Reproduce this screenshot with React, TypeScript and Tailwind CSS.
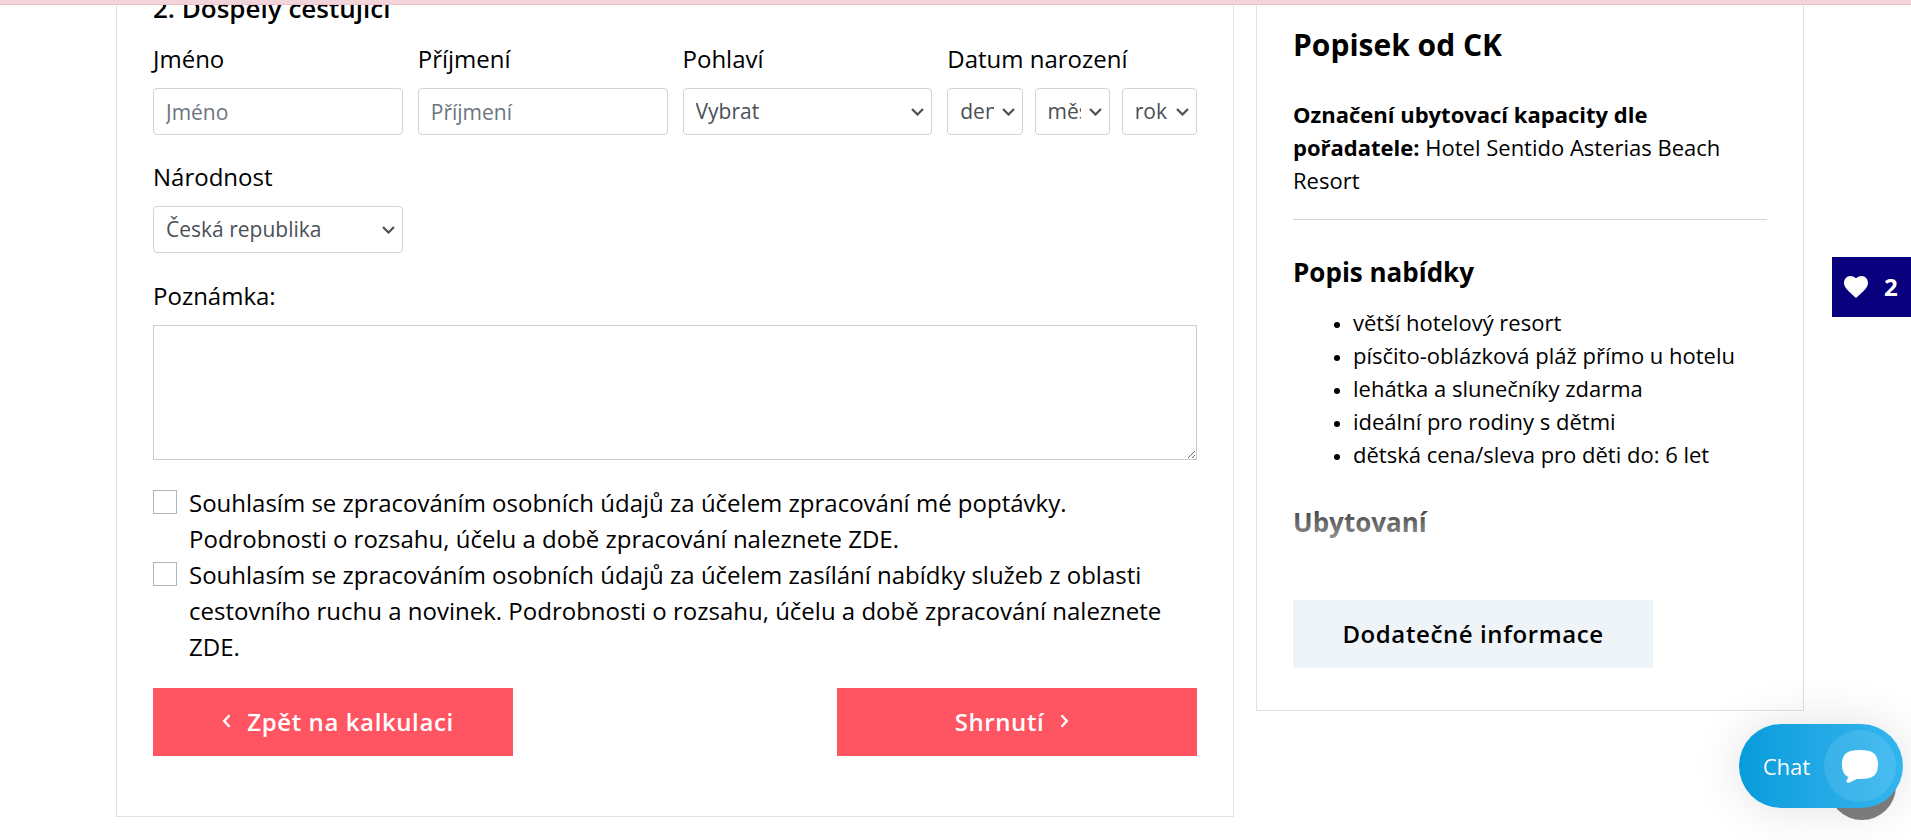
import { FC, ReactNode, SelectHTMLAttributes } from "react"

const labelClass = "mb-[11px] block text-2xl leading-9"
const fieldClass = "block h-[47px] w-full rounded border border-[#ced4da] bg-white px-3 text-[21px] text-[#495057] placeholder:text-[#6c757d]"

const offerPoints = [
    "větší hotelový resort",
    "písčito-oblázková pláž přímo u hotelu",
    "lehátka a slunečníky zdarma",
    "ideální pro rodiny s dětmi",
    "dětská cena/sleva pro děti do: 6 let",
]

const Chevron: FC<{ left?: boolean }> = ({ left }) => (
    <svg viewBox="0 0 9 14" className="mb-0.5 h-3.5 w-[9px]" fill="none" stroke="currentColor" strokeWidth="2.400">
        <path d={left ? "M7.500 1.200 2.200 7l5.300 5.800" : "M1.500 1.200 6.800 7l-5.300 5.800"} />
    </svg>
)

const Select: FC<SelectHTMLAttributes<HTMLSelectElement>> = ({ children, ...props }) => (
    <div className="relative min-w-0">
        <select {...props} className="block h-[47px] w-full appearance-none rounded border border-[#ced4da] bg-white pr-7 pl-3 text-[21px] text-[#495057]">
            {children}
        </select>
        <svg viewBox="0 0 13 8" className="pointer-events-none absolute top-5 right-2 h-2 w-[13px]" fill="none" stroke="#495057" strokeWidth="2.200">
            <path d="M1 1l5.500 5.500L12 1" />
        </svg>
    </div>
)

const Consent: FC<{ id: string, children: ReactNode }> = ({ id, children }) => (
    <div className="flex items-start gap-3">
        <input type="checkbox" id={id} className="mt-[5px] size-6 shrink-0 appearance-none border border-[#adb5bd] bg-white checked:bg-[#ff5562]" />
        <label htmlFor={id} className="text-2xl leading-9">{children}</label>
    </div>
)

const TravellerForm: FC = () => (
    <form className="border border-[#dee2e6] px-9 pb-[60px]" onSubmit={(e) => e.preventDefault()}>
        <h2 className="text-[26px] leading-9 font-semibold">2. Dospělý cestující</h2>

        <div className="mt-[15px] grid grid-cols-4 gap-x-[15px] gap-y-6">
            <div>
                <label htmlFor="firstName" className={labelClass}>Jméno</label>
                <input id="firstName" type="text" placeholder="Jméno" className={fieldClass} />
            </div>
            <div>
                <label htmlFor="lastName" className={labelClass}>Příjmení</label>
                <input id="lastName" type="text" placeholder="Příjmení" className={fieldClass} />
            </div>
            <div>
                <label htmlFor="gender" className={labelClass}>Pohlaví</label>
                <Select id="gender">
                    <option>Vybrat</option>
                    <option>Muž</option>
                    <option>Žena</option>
                </Select>
            </div>
            <div>
                <label htmlFor="birthDay" className={labelClass}>Datum narození</label>
                <div className="grid grid-cols-3 gap-3">
                    <Select id="birthDay">
                        <option>den</option>
                    </Select>
                    <Select aria-label="Měsíc narození">
                        <option>měsíc</option>
                    </Select>
                    <Select aria-label="Rok narození">
                        <option>rok</option>
                    </Select>
                </div>
            </div>
            <div>
                <label htmlFor="nationality" className={labelClass}>Národnost</label>
                <Select id="nationality">
                    <option>Česká republika</option>
                    <option>Slovensko</option>
                </Select>
            </div>
        </div>

        <label htmlFor="note" className={`${labelClass} mt-[25px]`}>Poznámka:</label>
        <textarea id="note" className="block h-[135px] w-full resize border border-[#cccccc] bg-white p-2 text-[21px]"></textarea>

        <div className="mt-[25px]">
            <Consent id="consentInquiry">
                Souhlasím se zpracováním osobních údajů za účelem zpracování mé poptávky. Podrobnosti o rozsahu, účelu a době zpracování naleznete <a href="#zasady">ZDE.</a>
            </Consent>
            <Consent id="consentOffers">
                Souhlasím se zpracováním osobních údajů za účelem zasílání nabídky služeb z oblasti cestovního ruchu a novinek. Podrobnosti o rozsahu, účelu a době zpracování naleznete <a href="#zasady">ZDE.</a>
            </Consent>
        </div>

        <div className="mt-[23px] flex justify-between">
            <button type="button" className="flex h-17 w-[360px] items-center justify-center gap-4 bg-[#ff5562] pl-2.5 text-2xl font-semibold tracking-wide text-white">
                <Chevron left />
                Zpět na kalkulaci
            </button>
            <button type="submit" className="flex h-17 w-[360px] items-center justify-center gap-4 bg-[#ff5562] pr-2.5 text-2xl font-semibold tracking-wide text-white">
                Shrnutí
                <Chevron />
            </button>
        </div>
    </form>
)

const OfferPanel: FC = () => (
    <aside className="border border-[#dee2e6] px-9 pt-[30px] pb-[42px]">
        <div className="relative">
            <h2 className="text-[30px] leading-[50px] font-bold">Popisek od CK</h2>
            <p className="mt-7 text-[22px] leading-[33px]">
                <strong>Označení ubytovací kapacity dle pořadatele:</strong> Hotel Sentido Asterias Beach Resort
            </p>
            <hr className="mt-[22px] border-[#ced4da]" />
            <h3 className="mt-[34px] text-[26px] leading-9 font-bold">Popis nabídky</h3>
            <ul className="mt-4 list-disc pl-15 text-[22px] leading-[33px] marker:text-lg">
                {offerPoints.map((point) => <li key={point}>{point}</li>)}
            </ul>
            <h3 className="mt-[33px] text-[26px] leading-9 font-bold">Ubytovaní</h3>
            {/* fade over the collapsed description */}
            <div className="absolute inset-x-0 -bottom-10 h-24 bg-gradient-to-b from-white/0 to-white"></div>
        </div>
        <button type="button" className="mt-[60px] h-17 w-[360px] bg-[#eff4f9] text-2xl font-semibold tracking-wide">
            Dodatečné informace
        </button>
    </aside>
)

const App: FC = () => {
    return (
        <div className="overflow-hidden bg-white font-['Open_Sans','Noto_Sans',sans-serif] text-black">
            <div className="fixed inset-x-0 top-0 z-10 h-[5px] border-b border-[#f1bfc6] bg-[#f1d5da]"></div>

            <main className="-mt-[11px] grid grid-cols-[minmax(0,1118fr)_minmax(0,548fr)] items-start gap-[22px] pr-[107px] pb-6 pl-29">
                <TravellerForm />
                <OfferPanel />
            </main>

            <a href="#oblibene" aria-label="Oblíbené" className="fixed top-[257px] right-0 flex h-15 w-[79px] items-center gap-4 bg-[#08007d] pl-3 text-2xl font-bold text-white">
                <svg viewBox="0 0 24 22" className="h-[22px] w-6" fill="currentColor">
                    <path d="M12 22C10 20 5 16 2.200 12.500C.6 10.500 0 8.800 0 6.800C0 3 2.800 0 6.400 0C8.800 0 10.800 1.100 12 2.300C13.200 1.100 15.200 0 17.600 0C21.200 0 24 3 24 6.800C24 8.800 23.400 10.500 21.800 12.500C19 16 14 20 12 22Z" />
                </svg>
                2
            </a>

            <button type="button" aria-label="Nahoru" className="fixed right-[15px] bottom-5 size-17 rounded-full bg-[#808080]"></button>
            <button type="button" className="fixed right-2 bottom-8 flex h-21 w-[164px] items-center justify-between rounded-full bg-gradient-to-r from-[#049cdb] to-[#33b5ef] pr-[7px] pl-6 text-[22px] text-white shadow-[0_0_50px_rgba(0,0,0,0.12)]">
                Chat
                <span className="flex size-18 items-center justify-center rounded-full bg-white/10">
                    <svg viewBox="0 0 36 33" className="h-[33px] w-9" fill="currentColor">
                        <path d="M18 0C31 0 36 4 36 14.500C36 25 31 29 18 29C16.500 29 15.500 29 14.500 28.900C12.500 30 10 31.500 7 32.700C5 33.200 3.800 32 4.500 30.500L6.500 27C2 25 0 21 0 14.500C0 4 5 0 18 0Z" />
                    </svg>
                </span>
            </button>
        </div>
    )
}

export default App
